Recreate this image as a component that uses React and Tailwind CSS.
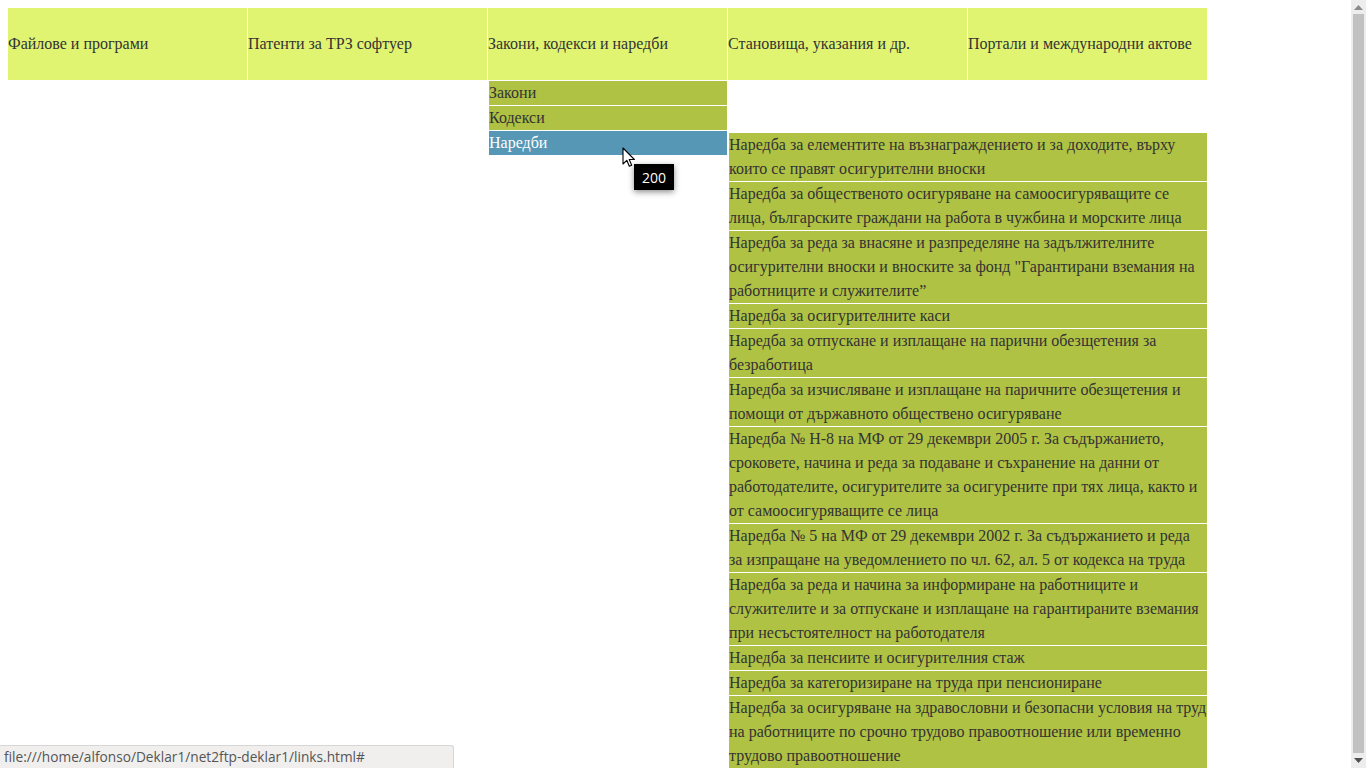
import React from "react";

const headers = [
  "Файлове и програми",
  "Патенти за ТРЗ софтуер",
  "Закони, кодекси и наредби",
  "Становища, указания и др.",
  "Портали и международни актове",
];

const sub = ["Закони", "Кодекси", "Наредби"];

const nested = [
  "Наредба за елементите на възнаграждението и за доходите, върху които се правят осигурителни вноски",
  "Наредба за общественото осигуряване на самоосигуряващите се лица, българските граждани на работа в чужбина и морските лица",
  "Наредба за реда за внасяне и разпределяне на задължителните осигурителни вноски и вноските за фонд \"Гарантирани вземания на работниците и служителите”",
  "Наредба за осигурителните каси",
  "Наредба за отпускане и изплащане на парични обезщетения за безработица",
  "Наредба за изчисляване и изплащане на паричните обезщетения и помощи от държавното обществено осигуряване",
  "Наредба № Н-8 на МФ от 29 декември 2005 г. За съдържанието, сроковете, начина и реда за подаване и съхранение на данни от работодателите, осигурителите за осигурените при тях лица, както и от самоосигуряващите се лица",
  "Наредба № 5 на МФ от 29 декември 2002 г. За съдържанието и реда за изпращане на уведомлението по чл. 62, ал. 5 от кодекса на труда",
  "Наредба за реда и начина за информиране на работниците и служителите и за отпускане и изплащане на гарантираните вземания при несъстоятелност на работодателя",
  "Наредба за пенсиите и осигурителния стаж",
  "Наредба за категоризиране на труда при пенсиониране",
  "Наредба за осигуряване на здравословни и безопасни условия на труд на работниците по срочно трудово правоотношение или временно трудово правоотношение",
];

export default function App() {
  return (
    <div className="relative flex h-screen w-full overflow-hidden bg-white">
      <div
        className="flex-1 overflow-hidden pl-2 pt-2 text-[16px] leading-6 text-[#333333]"
        style={{ fontFamily: '"Liberation Serif", "Times New Roman", serif' }}
      >
        <div className="flex gap-px">
          {headers.map((h) => (
            <div key={h} className="flex h-[72px] w-[239px] items-center bg-[#e0f472]">
              <span>{h}</span>
            </div>
          ))}
        </div>
        <div className="mt-px flex items-start">
          <div className="ml-[481px] flex w-[238px] flex-col gap-px">
            {sub.map((s, i) => (
              <div
                key={s}
                className={
                  i === 2
                    ? "h-6 bg-[#5597b5] text-white"
                    : "h-6 bg-[#afc244]"
                }
              >
                {s}
              </div>
            ))}
          </div>
          <div className="ml-[2px] mt-[52px] flex w-[478px] flex-col gap-px">
            {nested.map((n) => (
              <div key={n} className="bg-[#afc244]">
                {n}
              </div>
            ))}
          </div>
        </div>
      </div>

      {/* scrollbar */}
      <div className="flex w-[15px] flex-col items-center bg-[#ededed]">
        <div className="flex h-[14px] items-center justify-center">
          <svg width="9" height="5" viewBox="0 0 9 5">
            <polygon points="0,5 9,5 4.5,0" fill="#8a8a8a" />
          </svg>
        </div>
        <div className="w-[11px] flex-1 bg-[#c1c1c1]" />
        <div className="flex h-[15px] items-center justify-center">
          <svg width="9" height="5" viewBox="0 0 9 5">
            <polygon points="0,0 9,0 4.5,5" fill="#505050" />
          </svg>
        </div>
      </div>

      {/* cursor */}
      <svg
        className="absolute left-[622px] top-[147px]"
        width="14"
        height="21"
        viewBox="0 0 14 21"
      >
        <path
          d="M1 1 L1 17 L4.8 13.3 L7.3 19.3 L9.7 18.3 L7.2 12.5 L12.4 12.5 Z"
          fill="white"
          stroke="black"
          strokeWidth="1.1"
          strokeLinejoin="round"
        />
      </svg>

      {/* tooltip */}
      <div
        className="absolute left-[634px] top-[164px] flex h-[26px] w-[40px] items-center justify-center bg-black text-[14px] text-white shadow-[0_2px_6px_rgba(0,0,0,0.45)]"
        style={{ fontFamily: '"Open Sans", "DejaVu Sans", sans-serif' }}
      >
        200
      </div>

      {/* status bar */}
      <div
        className="absolute bottom-0 left-0 flex h-[23px] w-[454px] items-center rounded-tr-[3px] border-r border-t border-[#d6d6d6] bg-[#f0efee] pl-1 text-[13.7px] text-[#555555]"
        style={{ fontFamily: '"Open Sans", "DejaVu Sans", sans-serif' }}
      >
        file:///home/alfonso/Deklar1/net2ftp-deklar1/links.html#
      </div>
    </div>
  );
}
